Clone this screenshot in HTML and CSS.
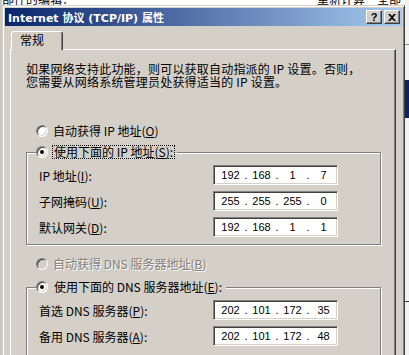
FILE: index.html
```html
<!DOCTYPE html>
<html lang="zh-CN">
<head>
    <meta charset="UTF-8">
    <meta name="viewport" content="width=device-width, initial-scale=1.0">
    <title>Internet 协议 (TCP/IP) 属性</title>
    <link rel="stylesheet" href="styles.css">
</head>
<body>
    <div class="desktop">
        <div class="desk-left"></div>
        <div class="desk-main">
            <div class="back-caption"><span>部件的编辑：</span><span>重新计算　全部</span></div>
        </div>
        <div class="desk-right">
            <div class="desk-rule"></div>
            <div class="desk-blue"></div>
            <div class="desk-tick"></div>
        </div>
    </div>

    <div class="dialog">
        <div class="titlebar">
            <span class="title">Internet 协议 (TCP/IP) 属性</span>
            <div class="title-buttons">
                <button class="cap-btn help">?</button>
                <button class="cap-btn close">
                    <svg width="8" height="7" viewBox="0 0 8 7"><path d="M0 0h2l2 2 2-2h2L5 3.5 8 7H6L4 5 2 7H0l3-3.5z" fill="#000"/></svg>
                </button>
            </div>
        </div>

        <div class="tabs">
            <div class="tab active">常规</div>
        </div>

        <div class="panel">
            <p class="intro">如果网络支持此功能，则可以获取自动指派的 IP 设置。否则，<br>您需要从网络系统管理员处获得适当的 IP 设置。</p>

            <div class="option first">
                <span class="radio"></span>
                <span class="opt-label">自动获得 IP 地址(<u>O</u>)</span>
            </div>

            <fieldset class="group">
                <legend class="option">
                    <span class="radio checked"></span>
                    <span class="opt-label focus">使用下面的 IP 地址(<u>S</u>):</span>
                </legend>
                <div class="field">
                    <label>IP 地址(<u>I</u>):</label>
                    <div class="ipbox"><span class="oct">192</span><span class="dot">.</span><span class="oct">168</span><span class="dot">.</span><span class="oct">1</span><span class="dot">.</span><span class="oct">7</span></div>
                </div>
                <div class="field">
                    <label>子网掩码(<u>U</u>):</label>
                    <div class="ipbox"><span class="oct">255</span><span class="dot">.</span><span class="oct">255</span><span class="dot">.</span><span class="oct">255</span><span class="dot">.</span><span class="oct">0</span></div>
                </div>
                <div class="field">
                    <label>默认网关(<u>D</u>):</label>
                    <div class="ipbox"><span class="oct">192</span><span class="dot">.</span><span class="oct">168</span><span class="dot">.</span><span class="oct">1</span><span class="dot">.</span><span class="oct">1</span></div>
                </div>
            </fieldset>

            <div class="option second disabled">
                <span class="radio"></span>
                <span class="opt-label">自动获得 DNS 服务器地址(<u>B</u>)</span>
            </div>

            <fieldset class="group dns">
                <legend class="option">
                    <span class="radio checked"></span>
                    <span class="opt-label plain">使用下面的 DNS 服务器地址(<u>E</u>):</span>
                </legend>
                <div class="field">
                    <label>首选 DNS 服务器(<u>P</u>):</label>
                    <div class="ipbox"><span class="oct">202</span><span class="dot">.</span><span class="oct">101</span><span class="dot">.</span><span class="oct">172</span><span class="dot">.</span><span class="oct">35</span></div>
                </div>
                <div class="field">
                    <label>备用 DNS 服务器(<u>A</u>):</label>
                    <div class="ipbox"><span class="oct">202</span><span class="dot">.</span><span class="oct">101</span><span class="dot">.</span><span class="oct">172</span><span class="dot">.</span><span class="oct">48</span></div>
                </div>
            </fieldset>
        </div>
    </div>
</body>
</html>
```

FILE: styles.css
```css
body {
    margin: 0;
    width: 409px;
    height: 355px;
    overflow: hidden;
    position: relative;
    font-family: "Noto Sans CJK SC", "Liberation Sans", sans-serif;
    font-size: 12px;
    color: #000;
}

/* window behind the dialog */
.desktop {
    display: flex;
    height: 355px;
    background: #fff;
}
.desk-left {
    width: 2px;
    background: #c9c7c2;
}
.desk-main {
    flex: 1;
    overflow: hidden;
}
.back-caption {
    display: flex;
    justify-content: space-between;
    margin-top: -8px;
    padding: 0 4px 0 0;
    line-height: 14px;
}
.desk-right {
    width: 4px;
    background: #f2f2f2;
}
.desk-rule {
    height: 1px;
    margin-top: 44px;
    background: #8a8a8a;
}
.desk-blue {
    height: 38px;
    margin-top: 35px;
    background: #0a246a;
}
.desk-tick {
    height: 1px;
    margin-top: 183px;
    background: #333;
}

/* dialog frame */
.dialog {
    position: absolute;
    left: 2px;
    top: 5px;
    width: 397px;
    height: 420px;
    padding: 2px;
    border: 1px solid;
    border-color: #d4d0c8 #404040 #404040 #d4d0c8;
    box-shadow: inset 1px 1px #fff, inset -1px -1px #808080;
    background: #d4d0c8;
}
.titlebar {
    display: flex;
    align-items: center;
    justify-content: space-between;
    height: 18px;
    padding: 0 2px 0 3px;
    background: linear-gradient(to right, #0a246a, #a6caf0);
    color: #fff;
    font: bold 11px "DejaVu Sans", "Noto Sans CJK SC", sans-serif;
}
.title-buttons {
    display: flex;
    gap: 2px;
}
.cap-btn {
    display: flex;
    align-items: center;
    justify-content: center;
    width: 16px;
    height: 14px;
    padding: 0;
    border: 1px solid;
    border-color: #fff #404040 #404040 #fff;
    box-shadow: inset -1px -1px #808080;
    background: #d4d0c8;
    color: #000;
    font: bold 11px "Liberation Sans", sans-serif;
}

/* tab strip */
.tabs {
    height: 18px;
    margin: 5px 0 0 6px;
}
.tab {
    position: relative;
    box-sizing: border-box;
    width: 52px;
    height: 19px;
    padding-left: 8px;
    border: 1px solid #fff;
    border-right-color: #404040;
    border-bottom: 0;
    border-radius: 3px 3px 0 0;
    box-shadow: inset -1px 0 #808080;
    background: #d4d0c8;
    line-height: 16px;
}
.panel {
    margin: 0 6px 0 5px;
    padding: 12px 14px 40px 15px;
    border: 1px solid;
    border-color: #fff #404040 #404040 #fff;
    box-shadow: inset -1px -1px #808080;
}

.intro {
    margin: 0;
    line-height: 13px;
    letter-spacing: 0.2px;
    white-space: nowrap;
}

/* radio rows */
.option {
    display: flex;
    align-items: center;
    height: 14px;
}
.option.first {
    margin: 36px 0 0 10px;
}
.option.second {
    margin: 12px 0 0 10px;
}
.radio {
    flex: none;
    display: flex;
    align-items: center;
    justify-content: center;
    box-sizing: border-box;
    width: 12px;
    height: 12px;
    border: 1px solid;
    border-color: #808080 #fff #fff #808080;
    border-radius: 50%;
    box-shadow: inset 1px 1px #404040, inset -1px -1px #d4d0c8;
    background: #fff;
}
.radio.checked::after {
    content: "";
    width: 4px;
    height: 4px;
    border-radius: 50%;
    background: #000;
}
.opt-label {
    margin-left: 5px;
    line-height: 12px;
    white-space: nowrap;
}
.opt-label.focus,
.opt-label.plain {
    margin-left: 4px;
    padding: 0 1px;
    border: 1px dotted #000;
}
.opt-label.plain {
    border-color: transparent;
}
.disabled .radio {
    background: #d4d0c8;
}
.disabled .opt-label {
    color: #808080;
    text-shadow: 1px 1px #fff;
}

/* group boxes */
.group {
    margin: 7px 0 0;
    padding: 6px 0 7px 9px;
    min-width: 0;
    border: 1px solid #808080;
    box-shadow: 1px 1px 0 #fff, inset 1px 1px 0 #fff;
}
.group.dns {
    margin-top: 9px;
    padding-bottom: 30px;
}
.group legend {
    padding: 0 2px 0 0;
    background: #d4d0c8;
}
.field {
    display: flex;
    align-items: center;
    height: 20px;
    margin-left: 3px;
}
.field + .field {
    margin-top: 6px;
}
.field label {
    width: 174px;
    white-space: nowrap;
}
.ipbox {
    display: flex;
    align-items: center;
    box-sizing: border-box;
    width: 125px;
    height: 20px;
    padding-left: 4px;
    border: 1px solid;
    border-color: #808080 #fff #fff #808080;
    box-shadow: inset 1px 1px #404040, inset -1px -1px #d4d0c8;
    background: #fff;
    font: 11px "Liberation Sans", sans-serif;
}
.oct {
    width: 25px;
    text-align: center;
}
.dot {
    width: 6px;
    text-align: center;
}
```
